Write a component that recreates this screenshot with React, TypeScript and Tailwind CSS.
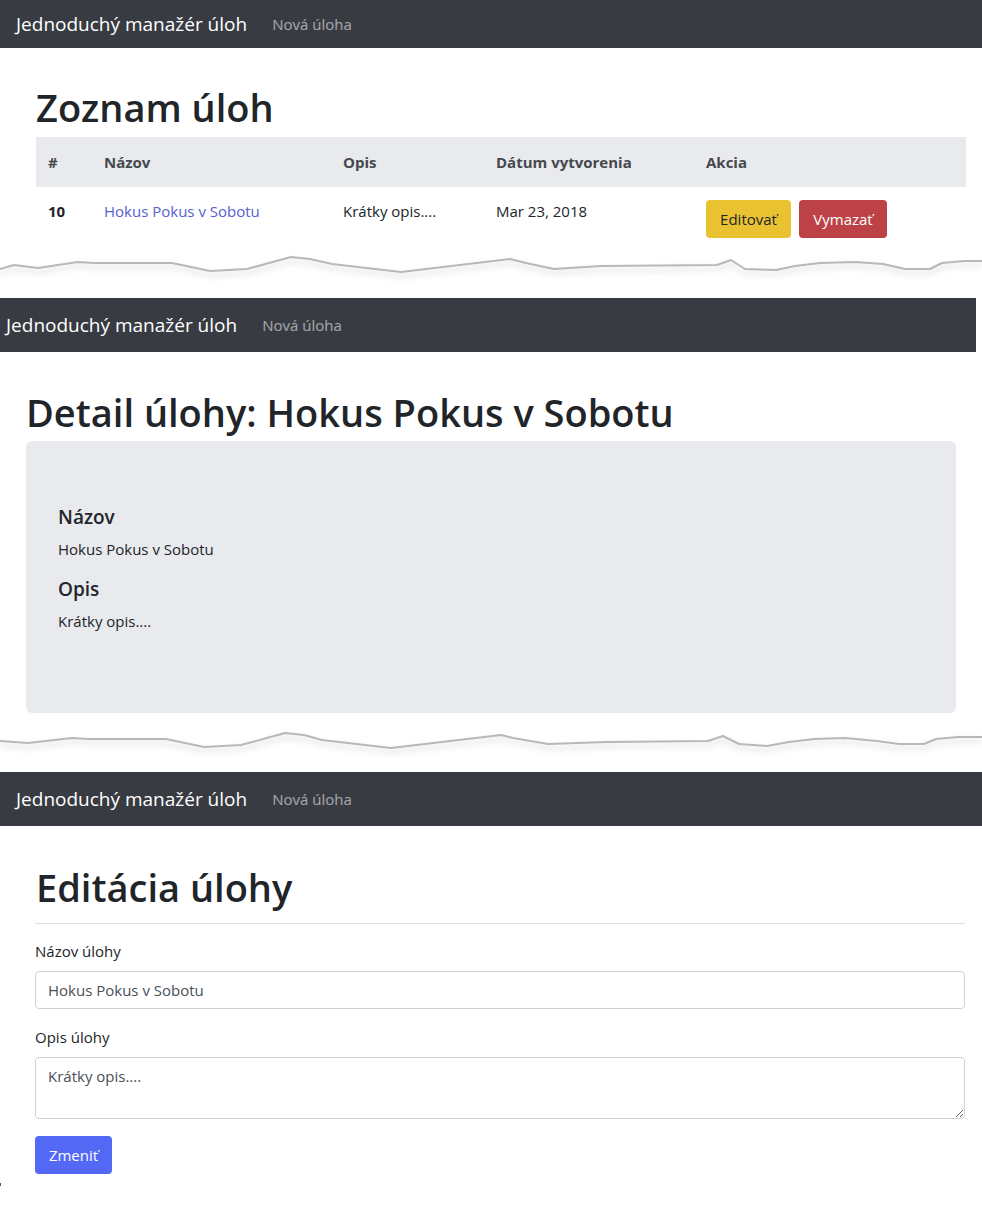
const FONT = "font-['Open_Sans','Noto_Sans',sans-serif]";

const edge1 =
  "0,22 14,18 38,21 78,15 94,16 172,16 210,24 247,22 291,10 310,12 332,17 401,25 510,12 526,16 554,22 601,19 717,18 731,13 745,22 776,23 795,19 820,16 855,15 883,17 905,22 930,22 942,16 964,14 982,14";
const edge2 =
  "0,28 28,30 72,25 88,26 166,26 204,34 241,32 285,20 304,22 322,27 391,35 501,22 513,25 548,31 607,29 708,28 723,23 739,31 767,33 789,29 814,26 845,25 877,28 899,31 924,31 936,26 958,24 982,24";

function TornEdge({ points, height }: { points: string; height: number }) {
  return (
    <svg
      width="982"
      height={height}
      viewBox={`0 0 982 ${height}`}
      className="block drop-shadow-[0_4px_3px_rgba(0,0,0,0.18)]"
    >
      <polyline points={points} fill="none" stroke="#b8b8b8" strokeWidth="2" strokeLinejoin="round" />
    </svg>
  );
}

function Navbar({ offset, className = "" }: { offset: string; className?: string }) {
  return (
    <nav className={`flex items-center bg-[#383b42] ${offset} ${className}`}>
      <span className="text-[19px] leading-[30px] text-white">Jednoduchý manažér úloh</span>
      <span className="ml-[25px] text-[15px] text-white/55">Nová úloha</span>
    </nav>
  );
}

function TaskList() {
  const cols = "grid grid-cols-[56px_239px_153px_210px_1fr]";
  return (
    <section>
      <Navbar offset="h-[48px] pl-4" />
      <div className="ml-[36px] mr-[16px]">
        <h1 className="mt-[35px] mb-[6px] text-[38px] leading-[48px] font-semibold text-[#212529]">Zoznam úloh</h1>
        <div className={`${cols} h-[50px] items-center bg-[#e9eaed] text-[15px] font-bold text-[#45494e]`}>
          <div className="pl-3">#</div>
          <div className="pl-3">Názov</div>
          <div className="pl-3">Opis</div>
          <div className="pl-3">Dátum vytvorenia</div>
          <div className="pl-3">Akcia</div>
        </div>
        <div className={`${cols} h-[60px] pt-3 text-[15px] leading-6 text-[#212529]`}>
          <div className="pl-3 font-bold">10</div>
          <div className="pl-3 text-[#5561d0]">Hokus Pokus v Sobotu</div>
          <div className="pl-3">Krátky opis....</div>
          <div className="pl-3">Mar 23, 2018</div>
          <div className="pl-3 flex gap-2 items-start">
            <button className="mt-px h-[38px] w-[85px] rounded bg-[#e9c232] text-[#212529]">Editovať</button>
            <button className="mt-px h-[38px] w-[88px] rounded bg-[#bd4247] text-white">Vymazať</button>
          </div>
        </div>
      </div>
      <TornEdge points={edge1} height={51} />
    </section>
  );
}

function TaskDetail() {
  return (
    <section>
      <Navbar offset="h-[54px] pl-[6px]" className="mr-[6px]" />
      <div className="ml-[26px] mr-[26px]">
        <h1 className="mt-[36px] mb-[5px] text-[38px] leading-[48px] font-semibold text-[#212529]">
          Detail úlohy: Hokus Pokus v Sobotu
        </h1>
        <div className="rounded-md bg-[#e9eaed] px-8 py-16 text-[#212529]">
          <h5 className="mb-2 text-[19px] leading-6 font-semibold">Názov</h5>
          <p className="mb-4 text-[15px] leading-6">Hokus Pokus v Sobotu</p>
          <h5 className="mb-2 text-[19px] leading-6 font-semibold">Opis</h5>
          <p className="mb-4 text-[15px] leading-6">Krátky opis....</p>
        </div>
      </div>
      <TornEdge points={edge2} height={59} />
    </section>
  );
}

function TaskEdit() {
  return (
    <section>
      <Navbar offset="h-[54px] pl-4" />
      <div className="ml-[35px] mr-[17px]">
        <h1 className="mt-[37px] mb-[2px] pl-px text-[38px] leading-[48px] font-semibold text-[#212529]">Editácia úlohy</h1>
        <div className="mt-[12px] mb-[15px] h-px bg-[#dedede]" />
        <label className="block mb-2 text-[15px] leading-6 text-[#212529]">Názov úlohy</label>
        <input
          readOnly
          defaultValue="Hokus Pokus v Sobotu"
          className={`block w-full h-[38px] rounded border border-[#cfd3d7] px-3 text-[15px] text-[#495057] outline-none ${FONT}`}
        />
        <label className="block mt-4 mb-2 text-[15px] leading-6 text-[#212529]">Opis úlohy</label>
        <textarea
          readOnly
          defaultValue="Krátky opis...."
          className={`block w-full h-[62px] rounded border border-[#cfd3d7] px-3 py-[6px] text-[15px] leading-6 text-[#495057] outline-none ${FONT}`}
        />
        <button className="mt-[17px] h-[38px] w-[77px] rounded bg-[#5468f6] text-[15px] text-white">Zmeniť</button>
      </div>
      <div className="mt-[9px] h-[3px] w-px bg-[#555]" />
    </section>
  );
}

export default function App() {
  return (
    <div className={`w-[982px] min-h-[1219px] bg-white ${FONT}`}>
      <TaskList />
      <TaskDetail />
      <TaskEdit />
    </div>
  );
}
